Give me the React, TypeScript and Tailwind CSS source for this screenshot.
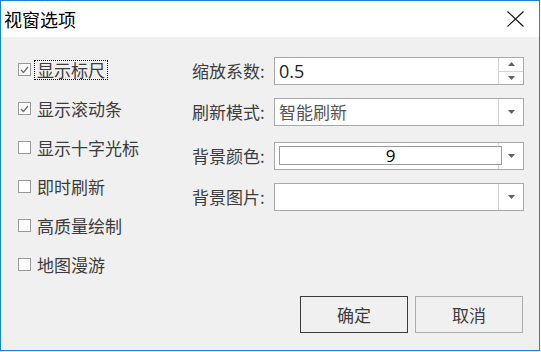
import React from 'react';

const cjk = { fontFamily: '"Noto Sans CJK SC", "Noto Sans", sans-serif' };

const options = [
  { label: '显示标尺', checked: true, focused: true },
  { label: '显示滚动条', checked: true },
  { label: '显示十字光标', checked: false },
  { label: '即时刷新', checked: false },
  { label: '高质量绘制', checked: false },
  { label: '地图漫游', checked: false },
];

function CheckBox({ checked }: { checked: boolean }) {
  return (
    <span className="w-[13px] h-[13px] border border-[#9a9a9a] bg-white flex items-center justify-center shrink-0">
      {checked && (
        <svg width="9" height="8" viewBox="0 0 9 8">
          <path d="M1 4 L3.5 6.5 L8 1" fill="none" stroke="#6d6d6d" strokeWidth="1.3" />
        </svg>
      )}
    </span>
  );
}

function DownArrow() {
  return (
    <svg width="7" height="4" viewBox="0 0 7 4">
      <path d="M0 0 L7 0 L3.5 4 Z" fill="#606060" />
    </svg>
  );
}

function ComboBox({ children }: { children?: React.ReactNode }) {
  return (
    <div className="w-[250px] h-[28px] border border-[#a9a9a9] bg-white flex">
      <div className="flex-1 relative">{children}</div>
      <div className="w-[25px] border-l border-[#d4d4d4] flex items-center justify-center">
        <DownArrow />
      </div>
    </div>
  );
}

export default function App() {
  return (
    <div className="w-[541px] h-[352px] bg-white">
      <div className="w-[540px] h-[351px] border border-[#1883d7] flex flex-col" style={cjk}>
        <div className="h-[36px] bg-white flex items-center justify-between pl-[3px] pr-[15px]">
          <span className="text-[18px] text-black leading-none">视窗选项</span>
          <svg width="17" height="16" viewBox="0 0 17 16">
            <path d="M0.5 0.5 L16.5 15.5 M16.5 0.5 L0.5 15.5" stroke="#111" strokeWidth="1.1" />
          </svg>
        </div>

        <div className="flex-1 bg-[#f0f0f0] flex flex-col">
          <div className="flex">
            <div className="pl-[17px] pt-[13px] w-[191px] flex flex-col">
              {options.map((o) => (
                <div key={o.label} className="h-[39px] flex items-center">
                  <CheckBox checked={o.checked} />
                  <span
                    className={
                      'ml-[3px] px-[2px] text-[17px] leading-[18px] text-[#3c3c3c] border border-dotted ' +
                      (o.focused ? 'border-black' : 'border-transparent')
                    }
                  >
                    {o.label}
                  </span>
                </div>
              ))}
            </div>

            <div className="flex flex-col pt-[20px] text-[17px] text-[#3c3c3c]">
              <div className="flex items-center h-[28px]">
                <span className="w-[82px]">缩放系数:</span>
                <div className="w-[250px] h-[28px] border border-[#a9a9a9] bg-white flex">
                  <div
                    className="flex-1 flex items-center pl-[4px] text-[18px] text-[#1e1e1e]"
                    style={{ fontFamily: '"Open Sans", "Noto Sans", sans-serif' }}
                  >
                    0.5
                  </div>
                  <div className="w-[25px] border-l border-[#d4d4d4] flex flex-col">
                    <div className="flex-1 flex items-center justify-center border-b border-[#d4d4d4]">
                      <svg width="7" height="4" viewBox="0 0 7 4">
                        <path d="M0 4 L7 4 L3.5 0 Z" fill="#606060" />
                      </svg>
                    </div>
                    <div className="flex-1 flex items-center justify-center">
                      <DownArrow />
                    </div>
                  </div>
                </div>
              </div>

              <div className="flex items-center h-[28px] mt-[13px]">
                <span className="w-[82px]">刷新模式:</span>
                <ComboBox>
                  <div className="h-full flex items-center pl-[4px] text-[#555]">智能刷新</div>
                </ComboBox>
              </div>

              <div className="flex items-center h-[28px] mt-[16px]">
                <span className="w-[82px]">背景颜色:</span>
                <ComboBox>
                  <div
                    className="absolute left-[4px] top-[3px] w-[223px] h-[19px] border border-[#9a9a9a] bg-white flex items-center justify-center text-[17px] text-black"
                    style={{ fontFamily: '"Open Sans", "Noto Sans", sans-serif' }}
                  >
                    9
                  </div>
                </ComboBox>
              </div>

              <div className="flex items-center h-[28px] mt-[13px]">
                <span className="w-[82px]">背景图片:</span>
                <ComboBox />
              </div>
            </div>
          </div>

          <div className="flex-1" />

          <div className="flex justify-end gap-[7px] pr-[16px] pb-[17px] text-[17px] text-[#3c3c3c]">
            <button className="w-[108px] h-[37px] border border-[#3a3a3a] bg-[#f0f0f0]">确定</button>
            <button className="w-[108px] h-[37px] border border-[#adadad] bg-[#f0f0f0]">取消</button>
          </div>
        </div>
      </div>
    </div>
  );
}
